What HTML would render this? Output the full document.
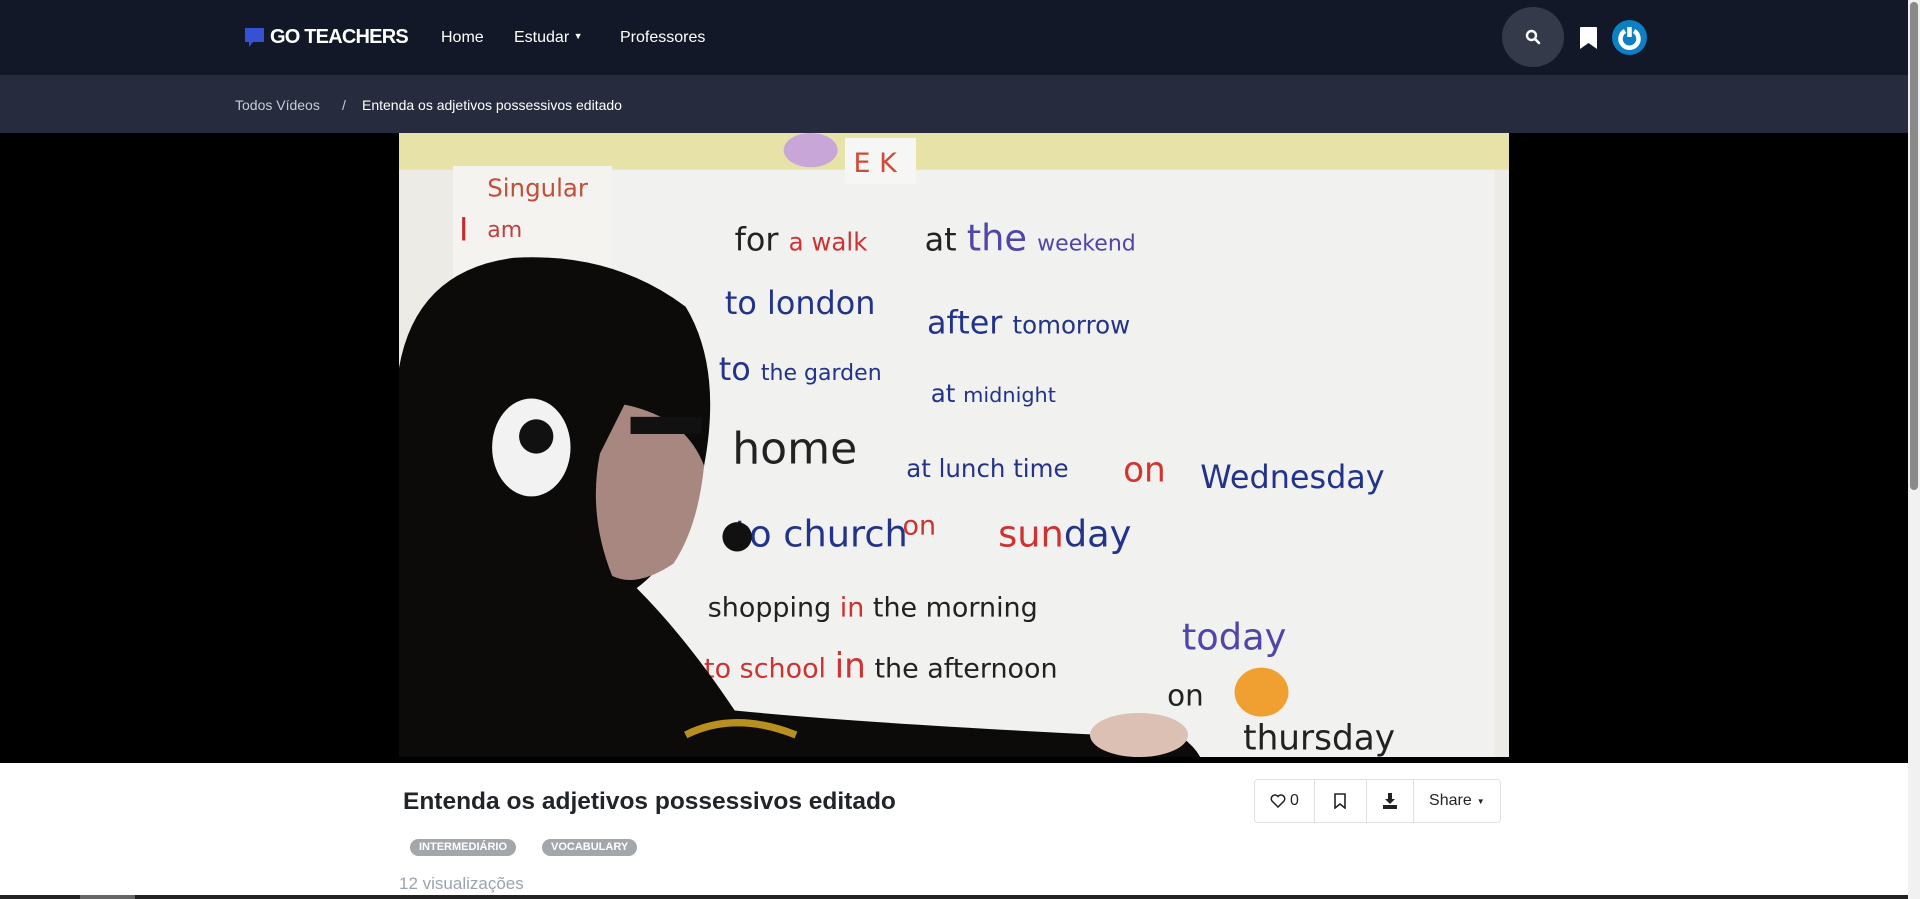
<!DOCTYPE html>
<html><head><meta charset="utf-8"><style>
*{margin:0;padding:0;box-sizing:border-box}
body{width:1920px;height:899px;overflow:hidden;background:#fff;font-family:"Liberation Sans",sans-serif;position:relative}
.hdr{position:absolute;left:0;top:0;width:1908px;height:75px;background:#121828}
.bc{position:absolute;left:0;top:75px;width:1908px;height:58px;background:#262b3e}
.vid{position:absolute;left:0;top:133px;width:1908px;height:630px;background:#000}
.t{position:absolute;white-space:nowrap}
.sb{position:absolute;left:1908px;top:0;width:12px;height:899px;background:#f1f1f1}
.thumb{position:absolute;left:1910px;top:2px;width:8px;height:488px;background:#8a8a8a;border-radius:4px}
.btns{position:absolute;left:1254px;top:779px;width:247px;height:44px;border:1px solid #dee2e6;border-radius:4px;display:flex}
.btns div{border-right:1px solid #dee2e6;display:flex;align-items:center;justify-content:center;font-size:16px;color:#212529}
.badge{position:absolute;top:839px;height:17px;background:#a3a6aa;color:#fff;font-size:11px;font-weight:bold;border-radius:9px;padding:0 9px;line-height:17px}
</style></head><body>
<div class="hdr"></div>
<svg style="position:absolute;left:245px;top:28px" width="20" height="20" viewBox="0 0 20 20"><path d="M0 0H19V14H8L4 19V14H0Z" fill="#3651d4"/></svg>
<div class="t" style="left:270px;top:26px;color:#fff;font-size:20px;font-weight:bold;letter-spacing:-0.8px">GO TEACHERS</div>
<div class="t" style="left:441px;top:29px;color:#fff;font-size:16px">Home</div>
<div class="t" style="left:514px;top:29px;color:#fff;font-size:16px">Estudar <span style="font-size:9px;vertical-align:3px">&#9660;</span></div>
<div class="t" style="left:620px;top:29px;color:#fff;font-size:16px">Professores</div>
<div style="position:absolute;left:1502px;top:7px;width:62px;height:60px;border-radius:50%;background:#343a4a"></div>
<svg style="position:absolute;left:1525px;top:29px" width="16" height="16" viewBox="0 0 16 16"><circle cx="6.5" cy="6.5" r="4.5" fill="none" stroke="#fff" stroke-width="2.4"/><path d="M10 10L14 14" stroke="#fff" stroke-width="2.6" stroke-linecap="round"/></svg>
<svg style="position:absolute;left:1580px;top:27px" width="17" height="22" viewBox="0 0 17 22"><path d="M0 1Q0 0 1 0H16Q17 0 17 1V22L8.5 16L0 22Z" fill="#fff"/></svg>
<div style="position:absolute;left:1612px;top:20px;width:35px;height:35px;border-radius:50%;background:#0d7fc2"></div>
<svg style="position:absolute;left:1612px;top:20px" width="35" height="35" viewBox="0 0 35 35"><path d="M13 11A9 9 0 1 0 22 11" fill="none" stroke="#fff" stroke-width="4.5"/><path d="M17.5 7V17" stroke="#fff" stroke-width="4.5"/></svg>
<div class="bc"></div>
<div class="t" style="left:235px;top:97px;color:#c9ccd4;font-size:14px">Todos Vídeos</div>
<div class="t" style="left:342px;top:97px;color:#c9ccd4;font-size:14px">/</div>
<div class="t" style="left:362px;top:97px;color:#fff;font-size:14px">Entenda os adjetivos possessivos editado</div>
<div class="vid"></div>
<svg style="position:absolute;left:399px;top:133px" width="1110" height="624" viewBox="326 108 906 510" preserveAspectRatio="none" font-family="'DejaVu Sans',sans-serif">
<rect x="326" y="108" width="906" height="510" fill="#ecebe6"/>
<rect x="326" y="108" width="906" height="30" fill="#e6e2a8"/>
<rect x="370" y="135" width="130" height="95" fill="#f4f3f0"/>
<rect x="500" y="138" width="720" height="480" fill="#f1f1ef"/>
<rect x="690" y="112" width="58" height="38" fill="#f6f6f4"/>
<ellipse cx="662" cy="122" rx="22" ry="14" fill="#c8a7d8"/>
<text x="697" y="140" font-size="22" fill="#d04a3a">E K</text>
<text x="398" y="160" font-size="20" fill="#c0503a">Singular</text>
<text x="375" y="196" font-size="26" fill="#c42a2a">I</text><text x="398" y="193" font-size="18" fill="#c04040">am</text>
<g font-size="26">
<text x="600" y="204" fill="#222">for <tspan fill="#c33" font-size="20">a walk</tspan></text>
<text x="755" y="204" fill="#222">at <tspan fill="#5046a8" font-size="30">the</tspan> <tspan fill="#5046a8" font-size="18">weekend</tspan></text>
<text x="592" y="256" fill="#23338a">to london</text>
<text x="757" y="272" fill="#23338a">after <tspan font-size="20">tomorrow</tspan></text>
<text x="587" y="310" fill="#23338a">to <tspan font-size="18">the garden</tspan></text>
<text x="760" y="328" fill="#23338a" font-size="20">at <tspan font-size="17">midnight</tspan></text>
<text x="598" y="378" fill="#222" font-size="36">home</text>
<text x="740" y="389" fill="#23338a" font-size="20">at lunch time</text>
<text x="917" y="393" fill="#d0362c" font-size="28">on</text>
<text x="980" y="398" fill="#23338a" font-size="26">Wednesday</text>
<text x="600" y="446" fill="#23338a" font-size="30">to church</text>
<text x="737" y="436" fill="#c33" font-size="22">on</text>
<text x="815" y="446" fill="#c33" font-size="30">sun<tspan fill="#23338a">day</tspan></text>
<text x="578" y="503" fill="#222" font-size="22">shopping <tspan fill="#c33">in</tspan> the morning</text>
<text x="965" y="530" fill="#5046a8" font-size="30">today</text>
<text x="575" y="553" fill="#c33" font-size="22">to school <tspan font-size="28">in</tspan> <tspan fill="#222">the afternoon</tspan></text>
<text x="953" y="576" fill="#222" font-size="24">on</text>
<text x="1015" y="612" fill="#222" font-size="28">thursday</text>
</g>
<ellipse cx="1030" cy="565" rx="22" ry="20" fill="#f0a030"/>
<path d="M326 300Q340 220 420 210Q500 205 560 250Q590 300 575 380Q560 450 520 480Q560 520 600 580Q700 590 900 600L940 590Q970 600 980 618H326Z" fill="#0d0b0a"/>
<path d="M510 330Q560 340 575 380Q570 430 550 460Q520 480 500 470Q480 420 490 370Z" fill="#a88780"/>
<rect x="515" y="340" width="58" height="14" fill="#111"/>
<ellipse cx="434" cy="365" rx="32" ry="40" fill="#f2f2f2"/>
<circle cx="438" cy="356" r="14" fill="#111"/>
<circle cx="602" cy="438" r="12" fill="#111"/>
<path d="M560 600Q600 580 650 600" stroke="#b89020" stroke-width="6" fill="none"/>
<ellipse cx="930" cy="600" rx="40" ry="18" fill="#dcc0b4"/>
</svg>
<div class="t" style="left:403px;top:788px;color:#212529;font-size:24.5px;font-weight:bold">Entenda os adjetivos possessivos editado</div>
<div class="btns">
<div style="width:60px"><svg width="16" height="14" viewBox="0 0 16 14"><path d="M8 13L2 7A3.5 3.5 0 0 1 8 2.5A3.5 3.5 0 0 1 14 7Z" fill="none" stroke="#222" stroke-width="1.5"/></svg>&nbsp;0</div>
<div style="width:53px"><svg width="12" height="16" viewBox="0 0 12 16"><path d="M1 1H11V15L6 11L1 15Z" fill="none" stroke="#222" stroke-width="1.6"/></svg></div>
<div style="width:47px"><svg width="14" height="16" viewBox="0 0 14 16"><path d="M5 0H9V6H12L7 11L2 6H5Z" fill="#222"/><rect x="0" y="12" width="14" height="4" fill="#222"/></svg></div>
<div style="width:87px;border-right:none;font-size:16px">Share <span style="font-size:8px;margin-left:5px">&#9660;</span></div>
</div>
<div class="badge" style="left:410px">INTERMEDIÁRIO</div>
<div class="badge" style="left:542px">VOCABULARY</div>
<div class="t" style="left:399px;top:874px;color:#9aa3ae;font-size:17px">12 visualizações</div>
<div style="position:absolute;left:0;top:895px;width:1908px;height:4px;background:#222"></div>
<div style="position:absolute;left:80px;top:895px;width:55px;height:4px;background:#666"></div>
<div class="sb"></div><div class="thumb"></div>
</body></html>
